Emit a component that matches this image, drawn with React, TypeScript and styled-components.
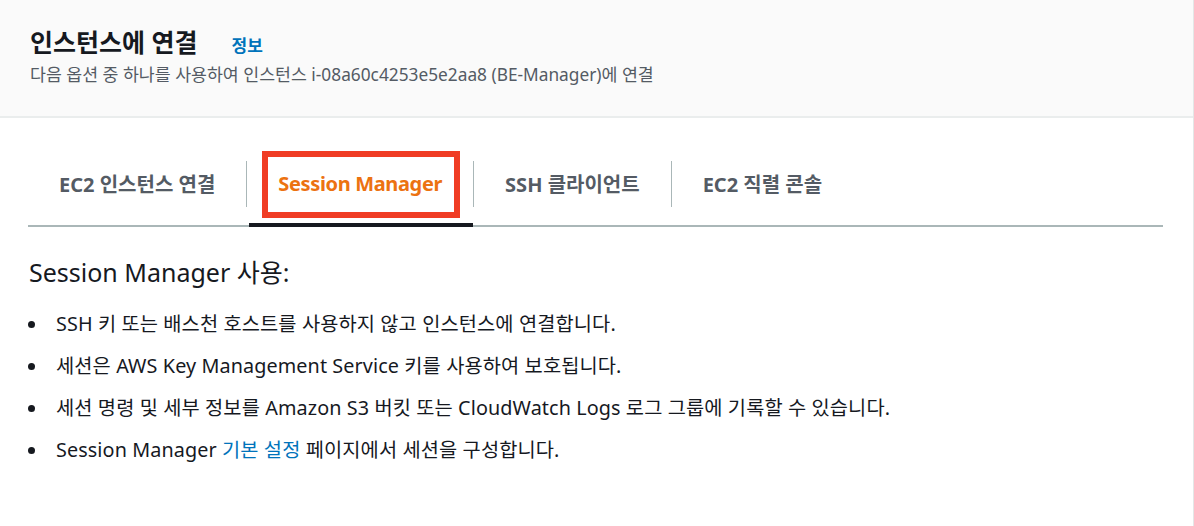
import React from "react";
import styled, { createGlobalStyle } from "styled-components";

const Global = createGlobalStyle`
  html, body { margin: 0; padding: 0; background: #ffffff; }
  body {
    font-family: "Noto Sans", "Noto Sans CJK KR", sans-serif;
    color: #16191f;
    -webkit-font-smoothing: antialiased;
  }
`;

const Page = styled.div`
  width: 1194px;
  height: 526px;
  box-sizing: border-box;
  border-right: 1px solid #e4e7e7;
  overflow: hidden;
`;

const Header = styled.header`
  background: #fafafa;
  border-bottom: 2px solid #eaeded;
  height: 118px;
  box-sizing: border-box;
  padding: 26px 30px 0 30px;
`;

const TitleRow = styled.div`
  display: flex;
  align-items: baseline;
  gap: 34px;
`;

const Title = styled.h1`
  margin: 0;
  font-size: 25px;
  line-height: 32px;
  font-weight: 700;
  color: #16191f;
`;

const InfoLink = styled.a`
  font-size: 17px;
  font-weight: 700;
  color: #0073bb;
  text-decoration: none;
`;

const Subtitle = styled.p`
  margin: 5px 0 0 0;
  font-size: 17.3px;
  line-height: 24px;
  color: #545b64;
`;

const Body = styled.main`
  padding: 24px 30px 0 28px;
`;

const TabList = styled.nav`
  display: flex;
  align-items: center;
  border-bottom: 2px solid #aab7b8;
  height: 83px;
`;

const Tab = styled.div<{ $active?: boolean }>`
  position: relative;
  height: 100%;
  display: flex;
  align-items: center;
  padding: 0 31px;
  font-size: 20px;
  font-weight: 700;
  color: ${(p) => (p.$active ? "#ec7211" : "#545b64")};
  &::after {
    content: "";
    display: ${(p) => (p.$active ? "block" : "none")};
    position: absolute;
    left: 2px;
    right: 0;
    bottom: -2px;
    height: 4px;
    background: #16191f;
  }
`;

const Separator = styled.span`
  width: 1px;
  height: 46px;
  background: #aab7b8;
  flex: none;
`;

const Highlight = styled.span`
  position: relative;
  display: inline-block;
  line-height: 26px;
  letter-spacing: -0.35px;
  &::after {
    content: "";
    position: absolute;
    top: -20px;
    bottom: -21px;
    left: -16px;
    right: -18px;
    border: 6px solid #f03c24;
  }
`;

const Section = styled.section`
  padding: 28px 0 0 0;
`;

const Heading = styled.h2`
  margin: 0;
  padding-left: 1px;
  font-size: 25px;
  line-height: 34px;
  font-weight: 400;
  color: #16191f;
`;

const List = styled.ul`
  list-style: none;
  margin: 21px 0 0 0;
  padding: 0;
  display: flex;
  flex-direction: column;
  gap: 14px;
`;

const Item = styled.li`
  display: flex;
  align-items: center;
  gap: 21px;
  font-size: 19.8px;
  line-height: 28px;
  color: #16191f;
`;

const Dot = styled.span`
  flex: none;
  width: 7px;
  height: 7px;
  border-radius: 50%;
  background: #16191f;
`;

const ItemText = styled.span`
  letter-spacing: 0.1px;
`;

const Link = styled.a`
  color: #0073bb;
  text-decoration: none;
`;

export default function App() {
  return (
    <>
      <Global />
      <Page>
        <Header>
          <TitleRow>
            <Title>인스턴스에 연결</Title>
            <InfoLink>정보</InfoLink>
          </TitleRow>
          <Subtitle>
            다음 옵션 중 하나를 사용하여 인스턴스 i-08a60c4253e5e2aa8 (BE-Manager)에 연결
          </Subtitle>
        </Header>
        <Body>
          <TabList>
            <Tab>EC2 인스턴스 연결</Tab>
            <Separator />
            <Tab $active>
              <Highlight>Session Manager</Highlight>
            </Tab>
            <Separator />
            <Tab>SSH 클라이언트</Tab>
            <Separator />
            <Tab>EC2 직렬 콘솔</Tab>
          </TabList>
          <Section>
            <Heading>Session Manager 사용:</Heading>
            <List>
              <Item>
                <Dot />
                <ItemText>SSH 키 또는 배스천 호스트를 사용하지 않고 인스턴스에 연결합니다.</ItemText>
              </Item>
              <Item>
                <Dot />
                <ItemText>세션은 AWS Key Management Service 키를 사용하여 보호됩니다.</ItemText>
              </Item>
              <Item>
                <Dot />
                <ItemText>
                  세션 명령 및 세부 정보를 Amazon S3 버킷 또는 CloudWatch Logs 로그 그룹에 기록할 수 있습니다.
                </ItemText>
              </Item>
              <Item>
                <Dot />
                <ItemText>
                  Session Manager <Link>기본 설정</Link> 페이지에서 세션을 구성합니다.
                </ItemText>
              </Item>
            </List>
          </Section>
        </Body>
      </Page>
    </>
  );
}
